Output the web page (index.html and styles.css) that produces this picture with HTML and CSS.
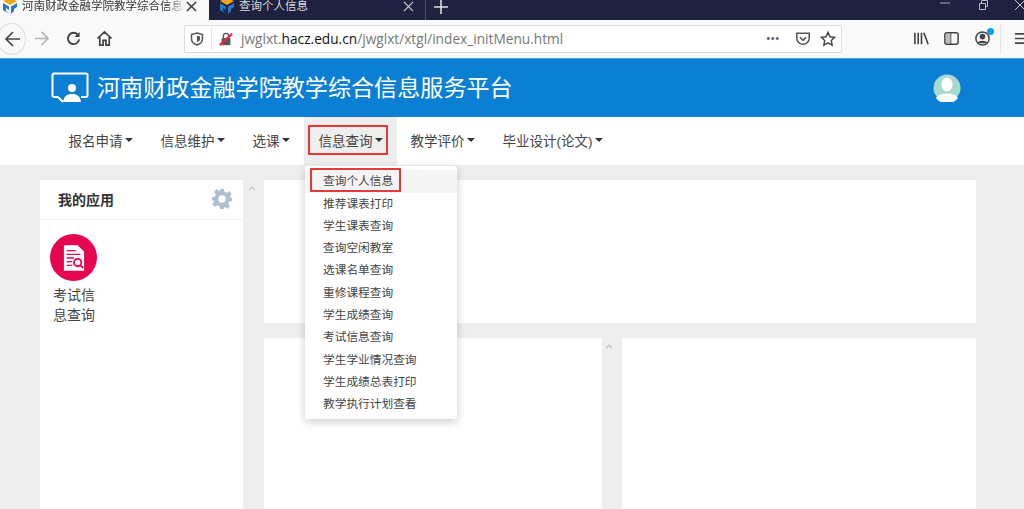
FILE: index.html
```html
<!DOCTYPE html>
<html lang="zh">
<head>
<meta charset="utf-8">
<title>查询个人信息</title>
<link rel="stylesheet" href="styles.css">
</head>
<body>
<div class="tabbar">
  <div class="tab active">
    <svg class="fav" viewBox="0 0 16 16"><path d="M8 0 15 3 8 7 1 3Z" fill="#f2a71b"/><path d="M1 5 7 8.5V12L4 10 4 13 7 16 1 12Z" fill="#2a78c8"/><path d="M15 5 9 8.5V16L12 13V11L15 9Z" fill="#2a78c8"/></svg>
    <span class="tab-title fade">河南财政金融学院教学综合信息</span>
    <svg class="tab-x" viewBox="0 0 12 12"><path d="M1 1 11 11M11 1 1 11" stroke="#333" stroke-width="1.5"/></svg>
  </div>
  <div class="tab dark">
    <svg class="fav" viewBox="0 0 16 16"><path d="M8 0 15 3 8 7 1 3Z" fill="#f2a71b"/><path d="M1 5 7 8.5V12L4 10 4 13 7 16 1 12Z" fill="#2a78c8"/><path d="M15 5 9 8.5V16L12 13V11L15 9Z" fill="#2a78c8"/></svg>
    <span class="tab-title">查询个人信息</span>
    <svg class="tab-x" viewBox="0 0 12 12"><path d="M1 1 11 11M11 1 1 11" stroke="#ccc" stroke-width="1.3"/></svg>
  </div>
  <svg class="plus" viewBox="0 0 14 14"><path d="M7 0V14M0 7H14" stroke="#ddd" stroke-width="1.6"/></svg>
  <div class="win">
    <svg class="win-ic" viewBox="0 0 10 10"><path d="M0 3H10" stroke="#aaa"/></svg>
    <svg class="win-ic" viewBox="0 0 10 10"><path d="M1.5 3.5H7.5V9.5H1.5ZM3.5 3V.5H9.5V6.5H8" fill="none" stroke="#bbb"/></svg>
    <svg class="win-ic" viewBox="0 0 10 10"><path d="M0 0 10 10M10 0 0 10" stroke="#ccc"/></svg>
  </div>
</div>
<div class="toolbar">
  <div class="back"><svg viewBox="0 0 18 18"><path d="M16 9H2M9 2 2 9 9 16" fill="none" stroke="#444" stroke-width="1.7"/></svg></div>
  <svg class="tool fwd" viewBox="0 0 18 18"><path d="M2 9H16M9 2 16 9 9 16" fill="none" stroke="#b5b5b8" stroke-width="1.7"/></svg>
  <svg class="tool" viewBox="0 0 18 18"><path d="M14 5.500A6 6 0 1 0 15 10" fill="none" stroke="#444" stroke-width="2"/><path d="M15.500 2V7.500H10Z" fill="#444"/></svg>
  <svg class="tool" viewBox="0 0 18 18"><path d="M1.500 9 9 2 16.500 9M4 7.500V16H7.500V11H10.500V16H14V7.500" fill="none" stroke="#444" stroke-width="1.800"/></svg>
  <div class="urlbar">
    <svg class="shield" viewBox="0 0 14 14"><path d="M7 1 12.500 2.500V7C12.500 10 10 12 7 13 4 12 1.500 10 1.500 7V2.500Z" fill="none" stroke="#555" stroke-width="1.500"/><path d="M7 3.500 10 4.500V7C10 8.500 8.500 9.500 7 10Z" fill="#555"/></svg>
    <span class="sep"></span>
    <svg class="lock" viewBox="0 0 16 16"><path d="M3 7H13V15H3Z" fill="#555"/><path d="M5 7V4.500A3 3 0 0 1 11 4.500V7" fill="none" stroke="#555" stroke-width="1.500"/><path d="M1 15 15 2" stroke="#e8223f" stroke-width="2.500"/></svg>
    <span class="url">jwglxt.<b>hacz.edu.cn</b>/jwglxt/xtgl/index_initMenu.html</span>
    <span class="url-more">•••</span>
    <svg class="url-ic" viewBox="0 0 18 18"><path d="M2 2.500H16V8A7 7 0 0 1 2 8Z" fill="none" stroke="#555" stroke-width="1.700"/><path d="M5.500 7 9 10.500 12.500 7" fill="none" stroke="#555" stroke-width="1.800"/></svg>
    <svg class="url-ic" viewBox="0 0 18 18"><path d="M9 1.500 11.300 6.500 16.500 7.100 12.700 10.700 13.700 16 9 13.300 4.300 16 5.300 10.700 1.500 7.100 6.700 6.500Z" fill="none" stroke="#444" stroke-width="1.600"/></svg>
  </div>
  <svg class="tool lib" viewBox="0 0 18 18"><path d="M2 3V15M5.500 3V15M9 3V15M11.500 3 16 15" fill="none" stroke="#444" stroke-width="1.700"/></svg>
  <svg class="tool" viewBox="0 0 18 18"><rect x="2" y="3" width="14" height="12" rx="2" fill="none" stroke="#444" stroke-width="1.600"/><path d="M8 3V15" stroke="#444" stroke-width="1.600"/><path d="M3 4H8V14H3Z" fill="#bbb"/></svg>
  <div class="acct">
    <svg class="tool" viewBox="0 0 18 18"><circle cx="9" cy="9" r="7" fill="none" stroke="#444" stroke-width="1.600"/><circle cx="9" cy="7" r="3" fill="#444"/><path d="M3.500 14C5 10.500 13 10.500 14.500 14Z" fill="#444"/></svg>
    <span class="acct-dot"></span>
  </div>
  <span class="vsep"></span>
  <svg class="tool menu" viewBox="0 0 18 18"><path d="M1 4H17M1 9H17M1 14H17" stroke="#444" stroke-width="1.800"/></svg>
</div>
<header class="head">
  <svg class="logo" viewBox="0 0 38 32"><path d="M7 25H3A1.500 1.500 0 0 1 1.500 23.500V3A1.500 1.500 0 0 1 3 1.500H35A1.500 1.500 0 0 1 36.500 3V23.500A1.500 1.500 0 0 1 35 25H30" fill="none" stroke="#fff" stroke-width="2"/><path d="M7 25 12 30" fill="none" stroke="#fff" stroke-width="2"/><circle cx="21" cy="16" r="4" fill="#fff"/><path d="M12 30C13 24 16 22 21 22S29 24 30 30Z" fill="#fff"/></svg>
  <h1 class="site-title">河南财政金融学院教学综合信息服务平台</h1>
  <svg class="avatar" viewBox="0 0 28 28"><circle cx="14" cy="14" r="13.500" fill="#a9d8cf"/><ellipse cx="14" cy="10.500" rx="5.500" ry="7" fill="#fff"/><path d="M3 24C6 18 22 18 25 24A13.500 13.500 0 0 1 3 24Z" fill="#fff"/></svg>
</header>
<nav class="nav">
  <div class="nav-item">报名申请<i class="caret"></i></div>
  <div class="nav-item">信息维护<i class="caret"></i></div>
  <div class="nav-item">选课<i class="caret"></i></div>
  <div class="nav-item open"><span class="nav-box">信息查询<i class="caret"></i></span></div>
  <div class="nav-item">教学评价<i class="caret"></i></div>
  <div class="nav-item">毕业设计(论文)<i class="caret"></i></div>
</nav>
<main class="content">
  <aside class="apps">
    <div class="apps-head">
      <span class="apps-title">我的应用</span>
      <svg class="gear" viewBox="0 0 24 24"><path fill-rule="evenodd" fill="#aebfce" d="M10 1H14L14.700 4.200 17 5.200 19.800 3.400 22.600 6.200 20.800 9 21.800 11.300 23 10V14L19.800 14.700 18.800 17 20.600 19.800 17.800 22.600 15 20.800 14 21.300 14 23H10L9.300 19.800 7 18.800 4.200 20.600 1.400 17.800 3.200 15 2.200 12.700 1 14V10L4.200 9.300 5.200 7 3.400 4.200 6.200 1.400 9 3.200 10 2.700ZM12 8A4 4 0 1 0 12 16 4 4 0 1 0 12 8Z"/></svg>
    </div>
    <div class="app">
      <div class="app-icon">
        <svg viewBox="0 0 24 30"><path d="M1 1H16L23 8V29H1Z" fill="#fff"/><path d="M4 7H14M4 11H19M4 15H12M4 19H10M4 23H10" stroke="#e5064f" stroke-width="1.500"/><circle cx="16" cy="20" r="4" fill="#fff" stroke="#e5064f" stroke-width="2"/><path d="M19 23 22 26" stroke="#e5064f" stroke-width="2"/></svg>
      </div>
      <div class="app-name">考试信息查询</div>
    </div>
  </aside>
  <div class="col-main">
    <div class="gutter"><svg class="chev" viewBox="0 0 8 5"><path d="M1 4 4 1 7 4" fill="none" stroke="#c4c4c4" stroke-width="1.200"/></svg></div>
    <div class="panels">
      <div class="panel panel-top"></div>
      <div class="row">
        <div class="panel panel-left"></div>
        <div class="gutter-mid"><svg class="chev" viewBox="0 0 8 5"><path d="M1 4 4 1 7 4" fill="none" stroke="#c4c4c4" stroke-width="1.200"/></svg></div>
        <div class="panel panel-right"></div>
      </div>
    </div>
  </div>
</main>
<ul class="dropdown">
  <li class="first"><span class="first-box">查询个人信息</span></li>
  <li>推荐课表打印</li>
  <li>学生课表查询</li>
  <li>查询空闲教室</li>
  <li>选课名单查询</li>
  <li>重修课程查询</li>
  <li>学生成绩查询</li>
  <li>考试信息查询</li>
  <li>学生学业情况查询</li>
  <li>学生成绩总表打印</li>
  <li>教学执行计划查看</li>
</ul>
</body>
</html>
```

FILE: styles.css
```css
* { box-sizing: border-box; }
html, body { margin: 0; padding: 0; height: 509px; overflow: hidden; }
body { position: relative; width: 1024px; background: #eee; color: #444; font-family: "Liberation Sans", "Noto Sans CJK SC", sans-serif; display: flex; flex-direction: column; }

.tabbar { height: 20px; flex: none; display: flex; align-items: center; background: #1e2140; overflow: hidden; }
.tab { height: 20px; display: flex; align-items: center; font-size: 11.500px; overflow: hidden; }
.tab.active { width: 209px; background: #f9f9fa; color: #333; padding: 0 12px 0 2px; }
.tab.dark { width: 217px; color: #ddd; padding: 0 11px 0 10px; border-right: 1px solid #4a4d66; }
.fav { width: 16px; height: 16px; flex: none; margin-top: -8px; }
.tab-title { margin-left: 4px; flex: 1; white-space: nowrap; line-height: 12px; margin-top: -7px; height: 14px; }
.fade { -webkit-mask-image: linear-gradient(90deg, #000 88%, transparent 100%); mask-image: linear-gradient(90deg, #000 88%, transparent 100%); }
.tab-x { width: 11px; height: 11px; flex: none; margin-top: -7px; }
.plus { width: 14px; height: 14px; margin-left: 8px; margin-top: -7px; }
.win { margin-left: auto; display: flex; gap: 27.500px; align-items: flex-start; height: 20px; margin-right: -1px; }
.win-ic { width: 10px; height: 10px; }

.toolbar { height: 39px; flex: none; background: #f9f9fa; display: flex; align-items: center; border-bottom: 1px solid #3ba3dc; padding-bottom: 1px; }
.back { width: 29px; height: 32px; margin-left: -3px; border: 1px solid #ddd; border-radius: 50%; display: flex; align-items: center; justify-content: center; flex: none; background: #f9f9fa; padding-left: 2px; }
.back svg { width: 18px; height: 18px; }
.tool { width: 17px; height: 17px; flex: none; }
.fwd { margin-left: 7px; }
.fwd + .tool { margin-left: 15px; }
.fwd + .tool + .tool { margin-left: 14px; }
.urlbar { margin-left: 71px; width: 658px; height: 28px; flex: none; background: #fff; border: 1px solid #ddd; border-radius: 2px; display: flex; align-items: center; padding: 0 5px 0 5px; }
.shield { width: 14px; height: 14px; flex: none; }
.sep { width: 1px; height: 22px; background: #e6e6e6; margin: 0 7px; flex: none; }
.lock { width: 14px; height: 14px; flex: none; }
.url { margin-left: 8px; font-family: "Open Sans", "Liberation Sans", sans-serif; font-size: 13.700px; color: #777; flex: 1; white-space: nowrap; }
.url b { font-weight: 400; color: #111; }
.url-more { font-size: 10px; color: #555; letter-spacing: 1px; margin-right: 6px; }
.url-ic { width: 16px; height: 16px; flex: none; margin-left: 9px; }
.lib { margin-left: 71px; }
.lib + .tool { margin-left: 13px; }
.acct { position: relative; margin-left: 14px; width: 17px; height: 17px; flex: none; }
.acct-dot { position: absolute; top: -2px; right: -3px; width: 7px; height: 7px; border-radius: 50%; background: #0a9fee; }
.vsep { width: 1px; height: 30px; background: #e6e6e6; margin-left: 9px; flex: none; }
.menu { margin-left: 13px; }

.head { height: 58px; flex: none; background: #0a7fd4; display: flex; align-items: center; padding: 0 63px 0 51px; }
.logo { width: 38px; height: 32px; flex: none; }
.site-title { margin: 0 0 0 8px; font-size: 23.100px; font-weight: 400; color: #fff; white-space: nowrap; line-height: 32px; flex: 1; }
.avatar { width: 28px; height: 28px; flex: none; }

.nav { height: 48px; flex: none; background: #fff; display: flex; align-items: stretch; padding-left: 54px; font-size: 13.500px; color: #444; }
.nav-item { padding: 0 14px 2px; display: flex; align-items: center; white-space: nowrap; }
.nav-item:first-child { padding-left: 14.500px; }
.nav-item.open { background: #eee; padding: 0 9px 2px 4px; }
.nav-box { height: 30px; display: flex; align-items: center; padding: 0 3px 0 9px; border: 2px solid #e5393b; }
.caret { display: inline-block; margin-left: 2px; border-top: 4px solid #333; border-left: 4px solid transparent; border-right: 4px solid transparent; width: 0; height: 0; }

.content { flex: 1; min-height: 0; display: flex; padding: 15px 48px 0 40px; overflow: hidden; }
.apps { width: 203px; flex: none; background: #fff; }
.apps-head { height: 40px; display: flex; align-items: center; justify-content: space-between; padding: 0 10px 2px 18px; border-bottom: 1px solid #f2f2f2; }
.apps-title { font-size: 14px; font-weight: 700; color: #333; }
.gear { width: 22px; height: 22px; }
.app { width: 67px; padding: 14px 0 0 10px; }
.app-icon { width: 47px; height: 47px; border-radius: 50%; background: #e5064f; display: flex; align-items: center; justify-content: center; }
.app-icon svg { width: 22px; height: 28px; }
.app-name { margin: 4px 0 0 3px; width: 43px; font-size: 14px; line-height: 20px; color: #444; }

.col-main { flex: 1; min-width: 0; display: flex; }
.gutter { width: 21px; flex: none; padding: 6px 0 0 5px; }
.gutter-mid { width: 20px; flex: none; padding: 6px 0 0 3px; }
.chev { width: 8px; height: 5px; display: block; }
.panels { flex: 1; min-width: 0; display: flex; flex-direction: column; gap: 15px; }
.panel { background: #fff; }
.panel-top { height: 143px; flex: none; }
.row { flex: 1; display: flex; min-height: 0; }
.panel-left { width: 338px; flex: none; }
.panel-right { flex: 1; }

.dropdown { position: absolute; left: 305px; top: 166px; width: 152px; height: 253px; margin: 0; padding: 4.300px 0 0; list-style: none; background: #fff; border-radius: 2px; box-shadow: 0 3px 10px rgba(0, 0, 0, .2); font-size: 11.700px; color: #444; }
.dropdown li { height: 22.300px; line-height: 22.300px; padding-left: 18px; white-space: nowrap; }
.dropdown .first { background: #f5f5f5; position: relative; }
.first-box { position: absolute; left: 5px; top: -2px; width: 91px; height: 24px; padding-left: 11px; line-height: 22px; border: 2px solid #e5393b; }
```
